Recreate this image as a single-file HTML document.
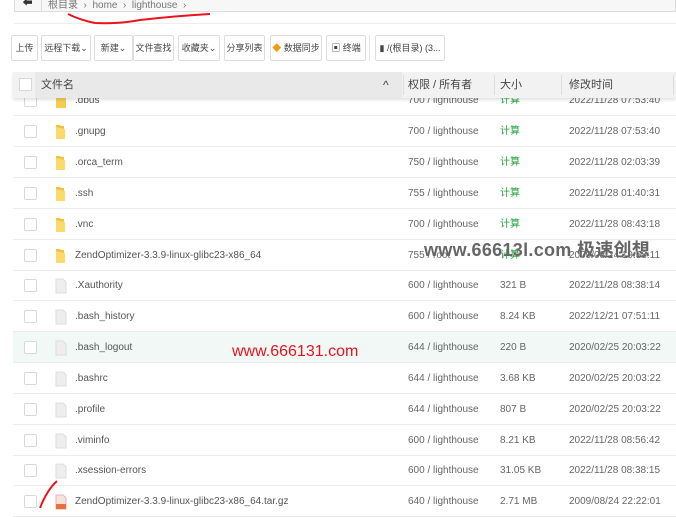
<!DOCTYPE html>
<html><head><meta charset="utf-8"><style>
*{box-sizing:border-box;margin:0;padding:0}
body{width:676px;height:508px;overflow:hidden;background:#fff;font-family:"Liberation Sans","Noto Sans CJK SC",sans-serif;font-size:10px;color:#555;position:relative}
.abs{position:absolute}
.crumb{left:14px;top:-2px;width:662px;height:14px;border:1px solid #ddd;border-top:none;background:#f7f7f7}
.btn{position:absolute;top:35px;height:26px;border:1px solid #ddd;border-radius:2px;background:#fff;font-size:9px;color:#444;line-height:24px;text-align:center;white-space:nowrap;overflow:hidden}
.hdr{left:13px;top:72px;width:663px;height:26px;background:#f2f2f2;box-shadow:0 2px 3px rgba(0,0,0,.12);z-index:2}
.hdr span{position:absolute;top:0;line-height:26px;font-size:11px;color:#444}
.row{position:absolute;left:13px;width:663px;height:31px;border-bottom:1px solid #ececec}
.cb{position:absolute;left:11px;top:9px;width:13px;height:13px;border:1px solid #d8d8d8;border-radius:2px;background:#fff}
.ic{position:absolute;left:42px;top:8px}
.nm{position:absolute;left:62px;top:0;line-height:31px;color:#555;font-size:10px}
.pm{position:absolute;left:395px;line-height:31px;color:#666}
.sz{position:absolute;left:487px;line-height:31px;color:#666}
.dt{position:absolute;left:556px;line-height:31px;color:#666}
.g{color:#20a53a}
</style></head><body>
<div class="abs crumb"></div>
<div class="abs" style="left:14px;top:0;width:28px;height:11px;border-right:1px solid #ddd;font-size:10px;line-height:8px;text-align:center;color:#333">&#11013;</div>
<div class="abs" style="left:48px;top:-4px;font-size:10px;color:#777;white-space:nowrap">根目录 &nbsp;›&nbsp; home &nbsp;›&nbsp; lighthouse &nbsp;›</div>
<svg class="abs" style="left:0;top:0;z-index:5" width="676" height="508"><path d="M68 14 Q80 20 95 23 Q120 24 140 20 Q175 16 210 14" stroke="#e8141e" stroke-width="2" fill="none"/><path d="M57 481 Q47 490 40 508" stroke="#e8141e" stroke-width="2" fill="none"/></svg>
<div class="abs" style="left:14px;top:23px;width:662px;height:1px;background:#eee"></div>
<div class="btn" style="left:11px;width:27px">上传</div>
<div class="btn" style="left:41px;width:50px">远程下载⌄</div>
<div class="btn" style="left:94px;width:39px">新建⌄</div>
<div class="btn" style="left:133px;width:41px">文件查找</div>
<div class="btn" style="left:178px;width:42px">收藏夹⌄</div>
<div class="btn" style="left:224px;width:41px">分享列表</div>
<div class="btn" style="left:270px;width:52px"><span style="color:#f39c12">◆</span> 数据同步</div>
<div class="btn" style="left:326px;width:40px">▣ 终端</div>
<div class="abs" style="left:369px;top:35px;width:1px;height:26px;background:#e5e5e5"></div>
<div class="btn" style="left:375px;width:70px">▮ /(根目录) (3...</div>
<div class="abs hdr">
<div class="abs" style="left:6px;top:6px;width:13px;height:13px;border:1px solid #d8d8d8;background:#fff"></div>
<div class="abs" style="left:22px;top:0;width:367px;height:26px;background:#e9e9e9"></div>
<span style="left:28px">文件名</span><span style="left:370px;font-size:12px">^</span>
<span style="left:395px">权限 / 所有者</span><span style="left:487px">大小</span><span style="left:556px">修改时间</span>
<div class="abs" style="left:390px;top:3px;width:1px;height:20px;background:#ddd"></div>
<div class="abs" style="left:481px;top:3px;width:1px;height:20px;background:#ddd"></div>
<div class="abs" style="left:548px;top:3px;width:1px;height:20px;background:#ddd"></div>
<div class="abs" style="left:660px;top:3px;width:1px;height:20px;background:#ddd"></div>
</div>
<div class="row" style="top:85px"><div class="cb"></div><svg class="ic" width="13" height="16"><path d="M1 1h3l1 2h3l3 2v10H1z" fill="#f5cd55"/></svg><span class="nm">.dbus</span><span class="pm">700 / lighthouse</span><span class="sz g">计算</span><span class="dt">2022/11/28 07:53:40</span></div>
<div class="row" style="top:116px"><div class="cb"></div><svg class="ic" width="13" height="16"><path d="M1 1h4l1 1h3v13H1z" fill="#f0c040"/><path d="M1 3l9 2v10H1z" fill="#fbd96a"/></svg><span class="nm">.gnupg</span><span class="pm">700 / lighthouse</span><span class="sz g">计算</span><span class="dt">2022/11/28 07:53:40</span></div>
<div class="row" style="top:147px"><div class="cb"></div><svg class="ic" width="13" height="16"><path d="M1 1h4l1 1h3v13H1z" fill="#f0c040"/><path d="M1 3l9 2v10H1z" fill="#fbd96a"/></svg><span class="nm">.orca_term</span><span class="pm">750 / lighthouse</span><span class="sz g">计算</span><span class="dt">2022/11/28 02:03:39</span></div>
<div class="row" style="top:178px"><div class="cb"></div><svg class="ic" width="13" height="16"><path d="M1 1h4l1 1h3v13H1z" fill="#f0c040"/><path d="M1 3l9 2v10H1z" fill="#fbd96a"/></svg><span class="nm">.ssh</span><span class="pm">755 / lighthouse</span><span class="sz g">计算</span><span class="dt">2022/11/28 01:40:31</span></div>
<div class="row" style="top:209px"><div class="cb"></div><svg class="ic" width="13" height="16"><path d="M1 1h4l1 1h3v13H1z" fill="#f0c040"/><path d="M1 3l9 2v10H1z" fill="#fbd96a"/></svg><span class="nm">.vnc</span><span class="pm">700 / lighthouse</span><span class="sz g">计算</span><span class="dt">2022/11/28 08:43:18</span></div>
<div class="row" style="top:240px"><div class="cb"></div><svg class="ic" width="13" height="16"><path d="M1 1h4l1 1h3v13H1z" fill="#f0c040"/><path d="M1 3l9 2v10H1z" fill="#fbd96a"/></svg><span class="nm">ZendOptimizer-3.3.9-linux-glibc23-x86_64</span><span class="pm">755 / root</span><span class="sz g">计算</span><span class="dt">2009/08/24 19:58:11</span></div>
<div class="row" style="top:270px"><div class="cb"></div><svg class="ic" width="12" height="16"><path d="M1 1h7l3 3v11H1z" fill="#eee" stroke="#ddd"/></svg><span class="nm">.Xauthority</span><span class="pm">600 / lighthouse</span><span class="sz">321 B</span><span class="dt">2022/11/28 08:38:14</span></div>
<div class="row" style="top:301px"><div class="cb"></div><svg class="ic" width="12" height="16"><path d="M1 1h7l3 3v11H1z" fill="#eee" stroke="#ddd"/></svg><span class="nm">.bash_history</span><span class="pm">600 / lighthouse</span><span class="sz">8.24 KB</span><span class="dt">2022/12/21 07:51:11</span></div>
<div class="row" style="top:332px;background:#f1f8f5"><div class="cb"></div><svg class="ic" width="12" height="16"><path d="M1 1h7l3 3v11H1z" fill="#eee" stroke="#ddd"/></svg><span class="nm">.bash_logout</span><span class="pm">644 / lighthouse</span><span class="sz">220 B</span><span class="dt">2020/02/25 20:03:22</span></div>
<div class="row" style="top:363px"><div class="cb"></div><svg class="ic" width="12" height="16"><path d="M1 1h7l3 3v11H1z" fill="#eee" stroke="#ddd"/></svg><span class="nm">.bashrc</span><span class="pm">644 / lighthouse</span><span class="sz">3.68 KB</span><span class="dt">2020/02/25 20:03:22</span></div>
<div class="row" style="top:394px"><div class="cb"></div><svg class="ic" width="12" height="16"><path d="M1 1h7l3 3v11H1z" fill="#eee" stroke="#ddd"/></svg><span class="nm">.profile</span><span class="pm">644 / lighthouse</span><span class="sz">807 B</span><span class="dt">2020/02/25 20:03:22</span></div>
<div class="row" style="top:425px"><div class="cb"></div><svg class="ic" width="12" height="16"><path d="M1 1h7l3 3v11H1z" fill="#eee" stroke="#ddd"/></svg><span class="nm">.viminfo</span><span class="pm">600 / lighthouse</span><span class="sz">8.21 KB</span><span class="dt">2022/11/28 08:56:42</span></div>
<div class="row" style="top:455px"><div class="cb"></div><svg class="ic" width="12" height="16"><path d="M1 1h7l3 3v11H1z" fill="#eee" stroke="#ddd"/></svg><span class="nm">.xsession-errors</span><span class="pm">600 / lighthouse</span><span class="sz">31.05 KB</span><span class="dt">2022/11/28 08:38:15</span></div>
<div class="row" style="top:486px"><div class="cb"></div><svg class="ic" width="12" height="16"><path d="M1 1h7l3 3v11H1z" fill="#f6e4d8" stroke="#eac"/><rect x="1" y="10" width="10" height="5" fill="#e8703a"/></svg><span class="nm">ZendOptimizer-3.3.9-linux-glibc23-x86_64.tar.gz</span><span class="pm">640 / lighthouse</span><span class="sz">2.71 MB</span><span class="dt">2009/08/24 22:22:01</span></div>
<div class="abs" style="left:424px;top:236px;font-size:18px;font-weight:bold;color:#666;white-space:nowrap;letter-spacing:0.3px;z-index:4">www.66613l.com 极速创想</div>
<div class="abs" style="left:232px;top:343px;font-size:16px;color:#e8141e;white-space:nowrap;z-index:4">www.666131.com</div>
</body></html>
